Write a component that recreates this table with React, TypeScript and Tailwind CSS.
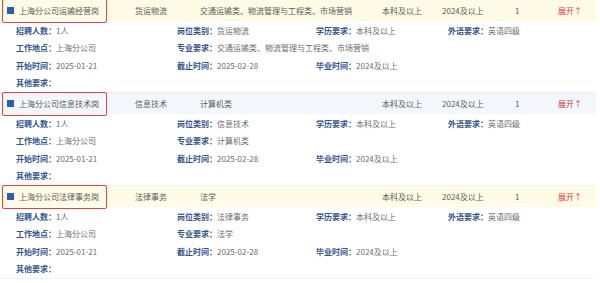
import React from 'react';

interface Job {
  id: number;
  name: string;
  category: string;
  major: string;
  degree: string;
  grad: string;
  count: string;
  highlight: boolean;
}

const jobs: Job[] = [
  {
    id: 1,
    name: '上海分公司运输经营岗',
    category: '货运物流',
    major: '交通运输类、物流管理与工程类、市场营销',
    degree: '本科及以上',
    grad: '2024及以上',
    count: '1',
    highlight: true,
  },
  {
    id: 2,
    name: '上海分公司信息技术岗',
    category: '信息技术',
    major: '计算机类',
    degree: '本科及以上',
    grad: '2024及以上',
    count: '1',
    highlight: false,
  },
  {
    id: 3,
    name: '上海分公司法律事务岗',
    category: '法律事务',
    major: '法学',
    degree: '本科及以上',
    grad: '2024及以上',
    count: '1',
    highlight: true,
  },
];

function Field({ label, value, className = '' }: { label: string; value?: string; className?: string }) {
  return (
    <div className={`flex items-center h-[17.5px] whitespace-nowrap ${className}`}>
      <span className="font-semibold text-[#33548f]">{label}：</span>
      <span className="text-[#6b6b6b]">{value}</span>
    </div>
  );
}

function JobItem({ job }: { job: Job }) {
  return (
    <div className="border-b-[1.5px] border-[#eef1f6]">
      {/* 标题行 */}
      <div
        className={`relative flex items-center h-[21px] text-[#5a5a5a] whitespace-nowrap ${
          job.highlight ? 'bg-[#fdfbe5]' : 'bg-[#f3f6fb]'
        }`}
      >
        <span className="absolute left-[2px] top-[-1px] w-[105px] h-[24px] border-[1.5px] border-[#e0453c] rounded-[2px]" />
        <div className="flex items-center w-[135px] pl-[7px]">
          <span className="w-[7px] h-[7px] bg-[#2b5db3] mr-[5px]" />
          <span>{job.name}</span>
        </div>
        <div className="w-[65px]">{job.category}</div>
        <div className="w-[182px]">{job.major}</div>
        <div className="w-[60px]">{job.degree}</div>
        <div className="w-[73px]">{job.grad}</div>
        <div className="w-[43px]">{job.count}</div>
        <div className="text-[#e53935]">展开↑</div>
      </div>

      {/* 详情 */}
      <div className="grid grid-cols-[161px_139px_132px_1fr] pl-[16px] pt-[1px]">
        <Field label="招聘人数" value="1人" />
        <Field label="岗位类别" value={job.category} />
        <Field label="学历要求" value={job.degree} />
        <Field label="外语要求" value="英语四级" />

        <Field label="工作地点" value="上海分公司" />
        <Field label="专业要求" value={job.major} className="col-span-3" />

        <Field label="开始时间" value="2025-01-21" />
        <Field label="截止时间" value="2025-02-28" />
        <Field label="毕业时间" value={job.grad} />
        <div />

        <Field label="其他要求" className="col-span-4" />
      </div>
    </div>
  );
}

export default function App() {
  return (
    <div
      className="w-[600px] h-[283px] overflow-hidden bg-white text-[8px] leading-none"
      style={{ fontFamily: '"Noto Sans CJK SC", "Noto Sans", sans-serif' }}
    >
      <div className="w-[596px]">
        {jobs.map((job) => (
          <JobItem key={job.id} job={job} />
        ))}
      </div>
    </div>
  );
}
